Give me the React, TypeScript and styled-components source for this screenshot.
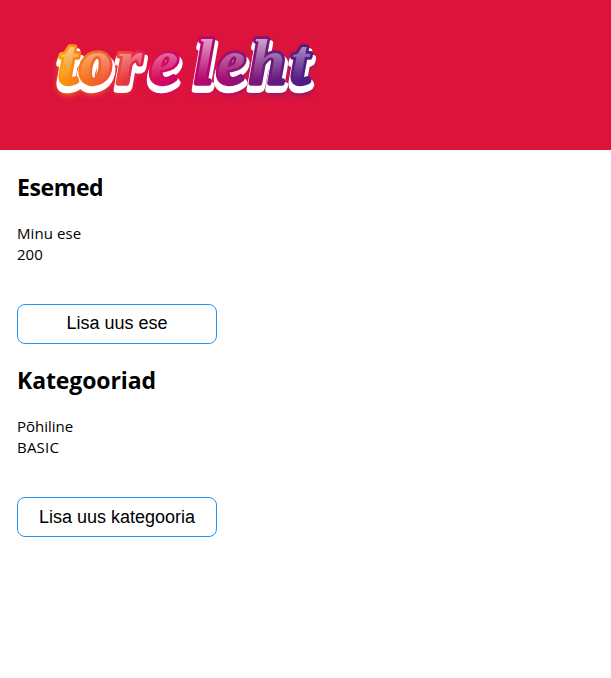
import React from "react";
import styled, { createGlobalStyle } from "styled-components";

const GlobalStyle = createGlobalStyle`
  body {
    margin: 0;
    background: #fff;
    color: #000;
    font-family: "Open Sans", "Noto Sans", sans-serif;
  }
`;

const Header = styled.header`
  height: 150px;
  background: #dc143c;
`;

const Logo = styled.svg`
  display: block;
  width: 360px;
  height: 150px;
  font: italic bold 64px "Liberation Serif", serif;
  stroke-linejoin: round;
`;

const Main = styled.main`
  padding: 18px 17px 0;
`;

const Section = styled.section`
  height: 193px;
`;

const Title = styled.h2<{ $spacing: number }>`
  margin: 0 0 17px;
  font-size: 23px;
  line-height: 38px;
  font-weight: 700;
  letter-spacing: ${(p) => p.$spacing}px;
`;

const Line = styled.div<{ $spacing: number }>`
  font-size: 15px;
  line-height: 21px;
  letter-spacing: ${(p) => p.$spacing}px;
`;

const AddButton = styled.button<{ $drop: number }>`
  display: block;
  width: 200px;
  height: 40px;
  margin-top: 39px;
  padding: ${(p) => p.$drop}px 0 2px;
  border: 1px solid #2196f3;
  border-radius: 8px;
  background: #fff;
  color: #000;
  font: 18px "Liberation Sans", Arial, sans-serif;
`;

const sections = [
  {
    title: "Esemed",
    titleSpacing: -0.4,
    lines: [
      { text: "Minu ese", spacing: 0.08 },
      { text: "200", spacing: 0 },
    ],
    action: "Lisa uus ese",
    drop: 0,
  },
  {
    title: "Kategooriad",
    titleSpacing: -0.1,
    lines: [
      { text: "Põhiline", spacing: 0 },
      { text: "BASIC", spacing: 0.2 },
    ],
    action: "Lisa uus kategooria",
    drop: 2,
  },
];

// Offsets of the white copies that build the extruded edge of the wordmark.
const edge = [
  [-1, 4],
  [-2, 7],
  [0, 7],
  [2, 6],
  [3, 4],
];

function BrandLogo() {
  return (
    <Logo viewBox="0 0 360 150" role="img" aria-label="tore leht">
      <defs>
        <linearGradient id="hue" gradientUnits="userSpaceOnUse" x1="55" y1="38" x2="308" y2="86">
          <stop offset="0" stopColor="#ffb300" />
          <stop offset="0.12" stopColor="#f77a1c" />
          <stop offset="0.26" stopColor="#ee4a38" />
          <stop offset="0.38" stopColor="#dc1057" />
          <stop offset="0.5" stopColor="#cb006d" />
          <stop offset="0.66" stopColor="#a50d72" />
          <stop offset="0.84" stopColor="#6c1a7e" />
          <stop offset="1" stopColor="#4b1b87" />
        </linearGradient>
        <linearGradient id="gloss" gradientUnits="userSpaceOnUse" x1="0" y1="40" x2="0" y2="80">
          <stop offset="0" stopColor="#fff" stopOpacity="0.6" />
          <stop offset="0.6" stopColor="#fff" stopOpacity="0.22" />
          <stop offset="1" stopColor="#fff" stopOpacity="0" />
        </linearGradient>
        <pattern id="face" patternUnits="userSpaceOnUse" width="360" height="150">
          <rect width="360" height="150" fill="url(#hue)" />
          <rect width="360" height="150" fill="url(#gloss)" />
        </pattern>
        <filter
          id="extrude"
          filterUnits="userSpaceOnUse"
          x="30"
          y="20"
          width="310"
          height="110"
          colorInterpolationFilters="sRGB"
        >
          <feGaussianBlur in="SourceGraphic" stdDeviation="3" result="soft" />
          <feOffset in="soft" dy="8" result="glow" />
          <feFlood floodColor="#fff" result="white" />
          {edge.map(([dx, dy], i) => (
            <feOffset key={i} in="SourceAlpha" dx={dx} dy={dy} result={`e${i}`} />
          ))}
          <feMerge result="edges">
            {edge.map((_, i) => (
              <feMergeNode key={i} in={`e${i}`} />
            ))}
          </feMerge>
          <feComposite in="white" in2="edges" operator="in" result="base" />
          <feMerge>
            <feMergeNode in="glow" />
            <feMergeNode in="base" />
            <feMergeNode in="SourceGraphic" />
          </feMerge>
        </filter>
      </defs>
      <text
        x="59 80 117 150 195 217 250 291"
        y="82.5"
        fill="url(#face)"
        stroke="url(#hue)"
        strokeWidth="5.4"
        paintOrder="stroke"
        filter="url(#extrude)"
      >
        toreleht
      </text>
    </Logo>
  );
}

export default function App() {
  return (
    <>
      <GlobalStyle />
      <Header>
        <BrandLogo />
      </Header>
      <Main>
        {sections.map((s) => (
          <Section key={s.title}>
            <Title $spacing={s.titleSpacing}>{s.title}</Title>
            {s.lines.map((line) => (
              <Line key={line.text} $spacing={line.spacing}>
                {line.text}
              </Line>
            ))}
            <AddButton type="button" $drop={s.drop}>
              {s.action}
            </AddButton>
          </Section>
        ))}
      </Main>
    </>
  );
}
